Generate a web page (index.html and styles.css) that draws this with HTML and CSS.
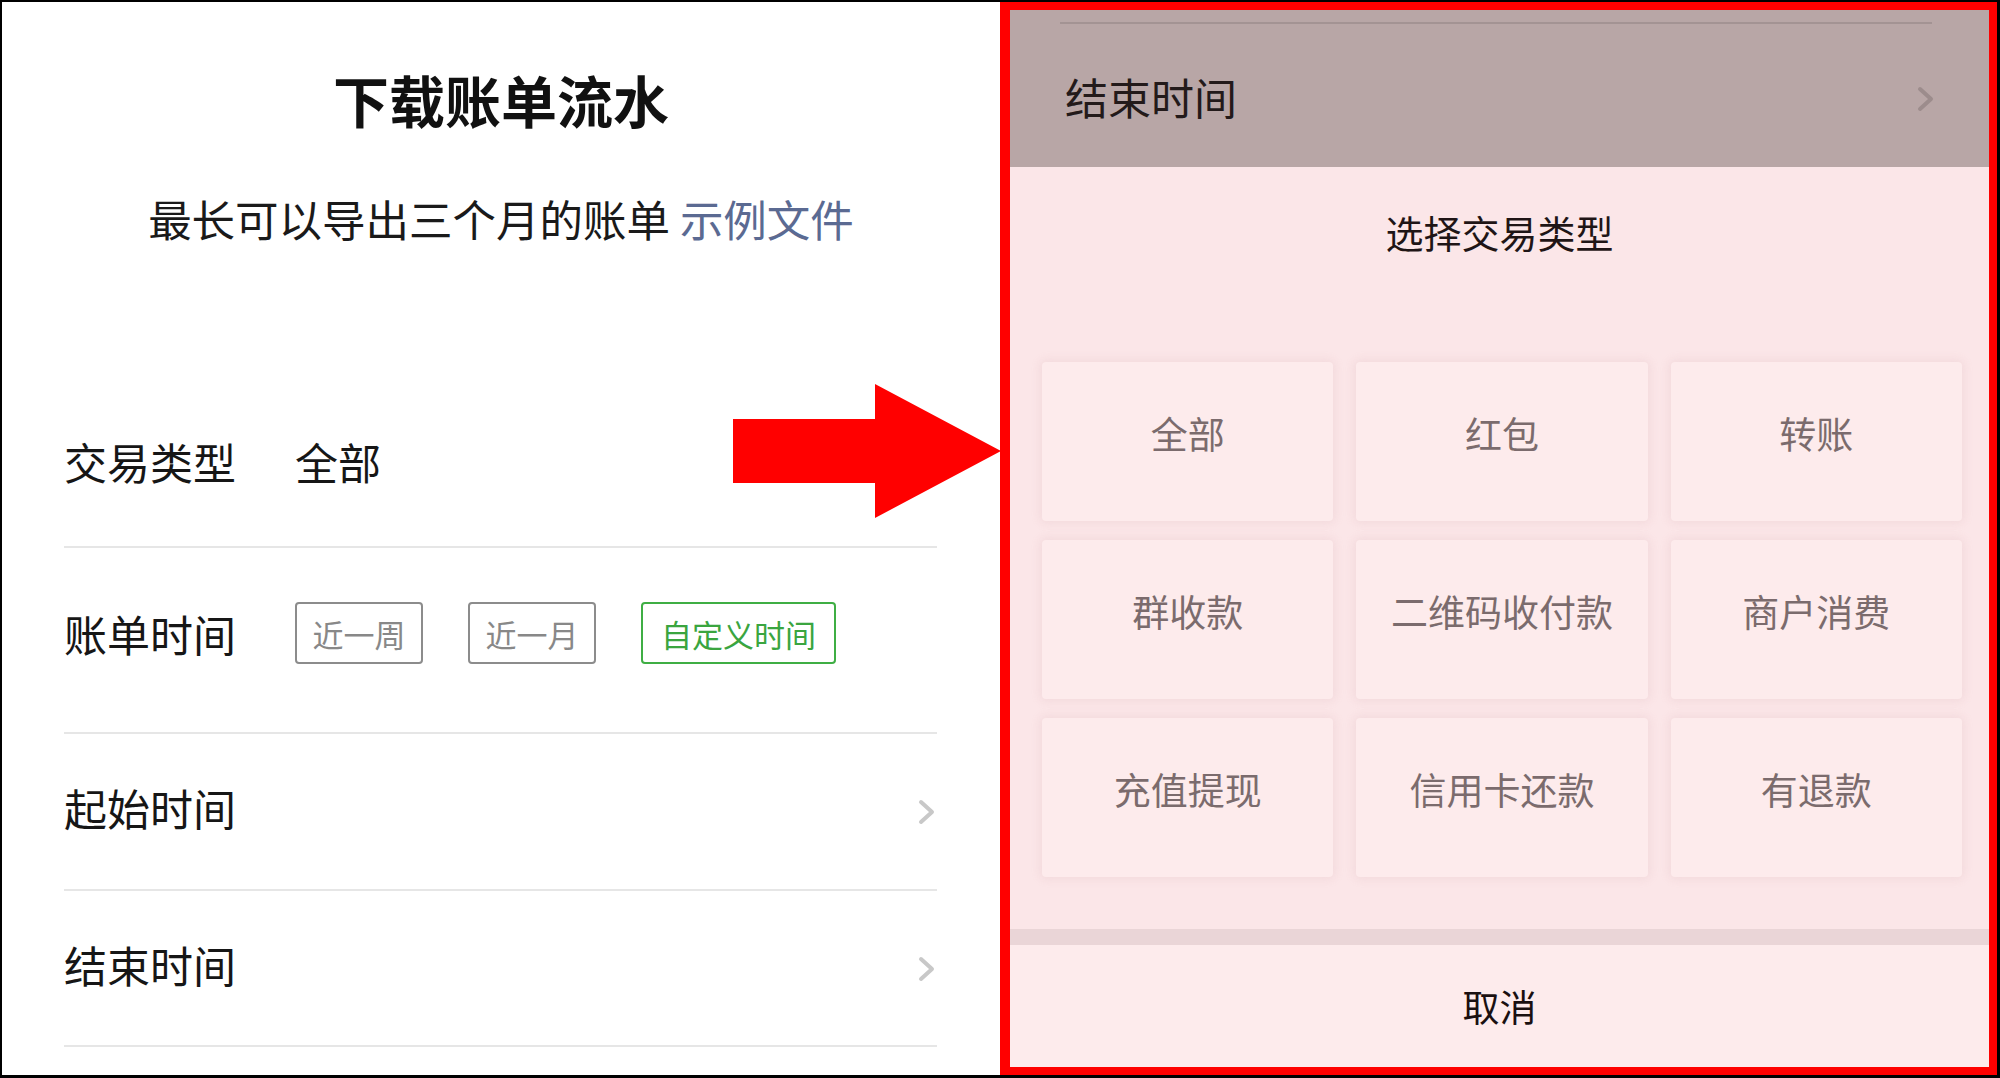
FILE: index.html
```html
<!DOCTYPE html>
<html lang="zh-CN">
<head>
<meta charset="utf-8">
<title>下载账单流水</title>
<link rel="stylesheet" href="styles.css">
</head>
<body>
<div class="frame">
  <section class="left">
    <header class="head">
      <h1 class="title">下载账单流水</h1>
      <p class="sub">最长可以导出三个月的账单 <span class="link">示例文件</span></p>
    </header>
    <div class="rows">
      <div class="row row-type">
        <span class="label">交易类型</span>
        <span class="value">全部</span>
      </div>
      <div class="row row-bill">
        <span class="label">账单时间</span>
        <div class="btns">
          <span class="btn">近一周</span>
          <span class="btn">近一月</span>
          <span class="btn btn-on">自定义时间</span>
        </div>
      </div>
      <div class="row row-start">
        <span class="label">起始时间</span>
        <svg class="chev" viewBox="0 0 17 26" width="17" height="26"><polyline points="3,3 14,13 3,23" fill="none" stroke="#c8c8c8" stroke-width="4" stroke-linecap="round" stroke-linejoin="round"/></svg>
      </div>
      <div class="row row-end">
        <span class="label">结束时间</span>
        <svg class="chev" viewBox="0 0 17 26" width="17" height="26"><polyline points="3,3 14,13 3,23" fill="none" stroke="#c8c8c8" stroke-width="4" stroke-linecap="round" stroke-linejoin="round"/></svg>
      </div>
    </div>
    <svg class="arrow" viewBox="0 0 268 135" width="268" height="135"><polygon points="0,35 142,35 142,0 268,67 142,134 142,99 0,99" fill="#ff0000"/></svg>
  </section>
  <section class="right">
    <div class="dim">
      <div class="dim-line"></div>
      <div class="dim-row">
        <span class="dim-label">结束时间</span>
        <svg class="chev" viewBox="0 0 17 26" width="17" height="26"><polyline points="3,3 14,13 3,23" fill="none" stroke="#9c8c8c" stroke-width="4" stroke-linecap="round" stroke-linejoin="round"/></svg>
      </div>
    </div>
    <div class="sheet">
      <div class="sheet-title">选择交易类型</div>
      <div class="grid">
        <div class="cell">全部</div>
        <div class="cell">红包</div>
        <div class="cell">转账</div>
        <div class="cell">群收款</div>
        <div class="cell">二维码收付款</div>
        <div class="cell">商户消费</div>
        <div class="cell">充值提现</div>
        <div class="cell">信用卡还款</div>
        <div class="cell">有退款</div>
      </div>
      <div class="band"></div>
      <div class="cancel">取消</div>
    </div>
  </section>
</div>
</body>
</html>
```
FILE: styles.css
```css
* { box-sizing: border-box; }
html, body {
  margin: 0;
  padding: 0;
  background: #000;
}
body {
  width: 2000px;
  height: 1078px;
  overflow: hidden;
  font-family: "Noto Sans CJK SC", "Noto Sans", sans-serif;
}
.frame {
  display: flex;
  width: 2000px;
  height: 1078px;
  padding: 2px 3px 3px 2px;
}

/* ---------- left panel ---------- */
.left {
  position: relative;
  width: 998px;
  height: 1073px;
  background: #fff;
  flex: none;
}
.head {
  height: 378px;
  padding-top: 57px;
  text-align: center;
}
.title {
  margin: 0;
  font-size: 56px;
  line-height: 80px;
  font-weight: 700;
  color: #111;
}
.sub {
  margin: 50px 0 0;
  font-size: 43.5px;
  line-height: 60px;
  color: #1a1a1a;
}
.link { color: #5b6a92; }

.rows {
  margin: 0 63px 0 62px;
}
.row {
  display: flex;
  align-items: center;
  border-bottom: 2px solid #e6e6e6;
  font-size: 43px;
  color: #161616;
}
.row-type { height: 168px; padding-bottom: 4px; }
.row-bill { height: 186px; padding-bottom: 14px; }
.row-start { height: 157px; padding-bottom: 10px; }
.row-end { height: 156px; padding-bottom: 8px; }
.label {
  width: 231px;
  flex: none;
}
.value { color: #161616; }
.btns {
  display: flex;
  gap: 45px;
}
.btn {
  height: 62px;
  width: 128px;
  border: 2px solid #8c8c8c;
  border-radius: 4px;
  font-size: 31px;
  color: #888;
  display: flex;
  align-items: center;
  justify-content: center;
}
.btn-on {
  width: 195px;
  border-color: #3fae44;
  color: #3aa53f;
}
.chev {
  margin-left: auto;
  margin-right: 2px;
  flex: none;
}
.row .chev { margin-top: 10px; }
.arrow {
  position: absolute;
  left: 731px;
  top: 382px;
}

/* ---------- right panel ---------- */
.right {
  flex: 1;
  height: 1073px;
  border-style: solid;
  border-color: #ff0000;
  border-width: 8px 8px 8px 10px;
  display: flex;
  flex-direction: column;
  background: #fbe6e8;
}
.dim {
  height: 157px;
  background: #b8a6a6;
  padding: 12px 57px 0 50px;
  flex: none;
}
.dim-line {
  height: 2px;
  background: #a39393;
}
.dim-row {
  display: flex;
  align-items: center;
  height: 146px;
  padding-left: 5px;
  padding-bottom: 2px;
  font-size: 43px;
  color: #231a1a;
}
.dim-row .chev { margin-right: -2px; margin-top: 6px; }

.sheet {
  flex: 1;
  display: flex;
  flex-direction: column;
}
.sheet-title {
  height: 132px;
  padding-bottom: 4px;
  display: flex;
  align-items: center;
  justify-content: center;
  font-size: 38px;
  color: #1f1516;
}
.grid {
  margin: 63px 27px 52px 32px;
  display: grid;
  grid-template-columns: repeat(3, 1fr);
  grid-auto-rows: 159px;
  gap: 19px 23px;
}
.cell {
  background: #fdebec;
  box-shadow: 0 0 10px 2px rgba(200, 150, 156, 0.16);
  border-radius: 4px;
  display: flex;
  align-items: center;
  justify-content: center;
  padding-bottom: 18px;
  font-size: 37px;
  color: #7b6b6d;
}
.band {
  height: 16px;
  background: #ead5d7;
  flex: none;
}
.cancel {
  flex: 1;
  display: flex;
  align-items: center;
  justify-content: center;
  font-size: 37px;
  color: #1a1011;
  background: #fdebec;
}
```
